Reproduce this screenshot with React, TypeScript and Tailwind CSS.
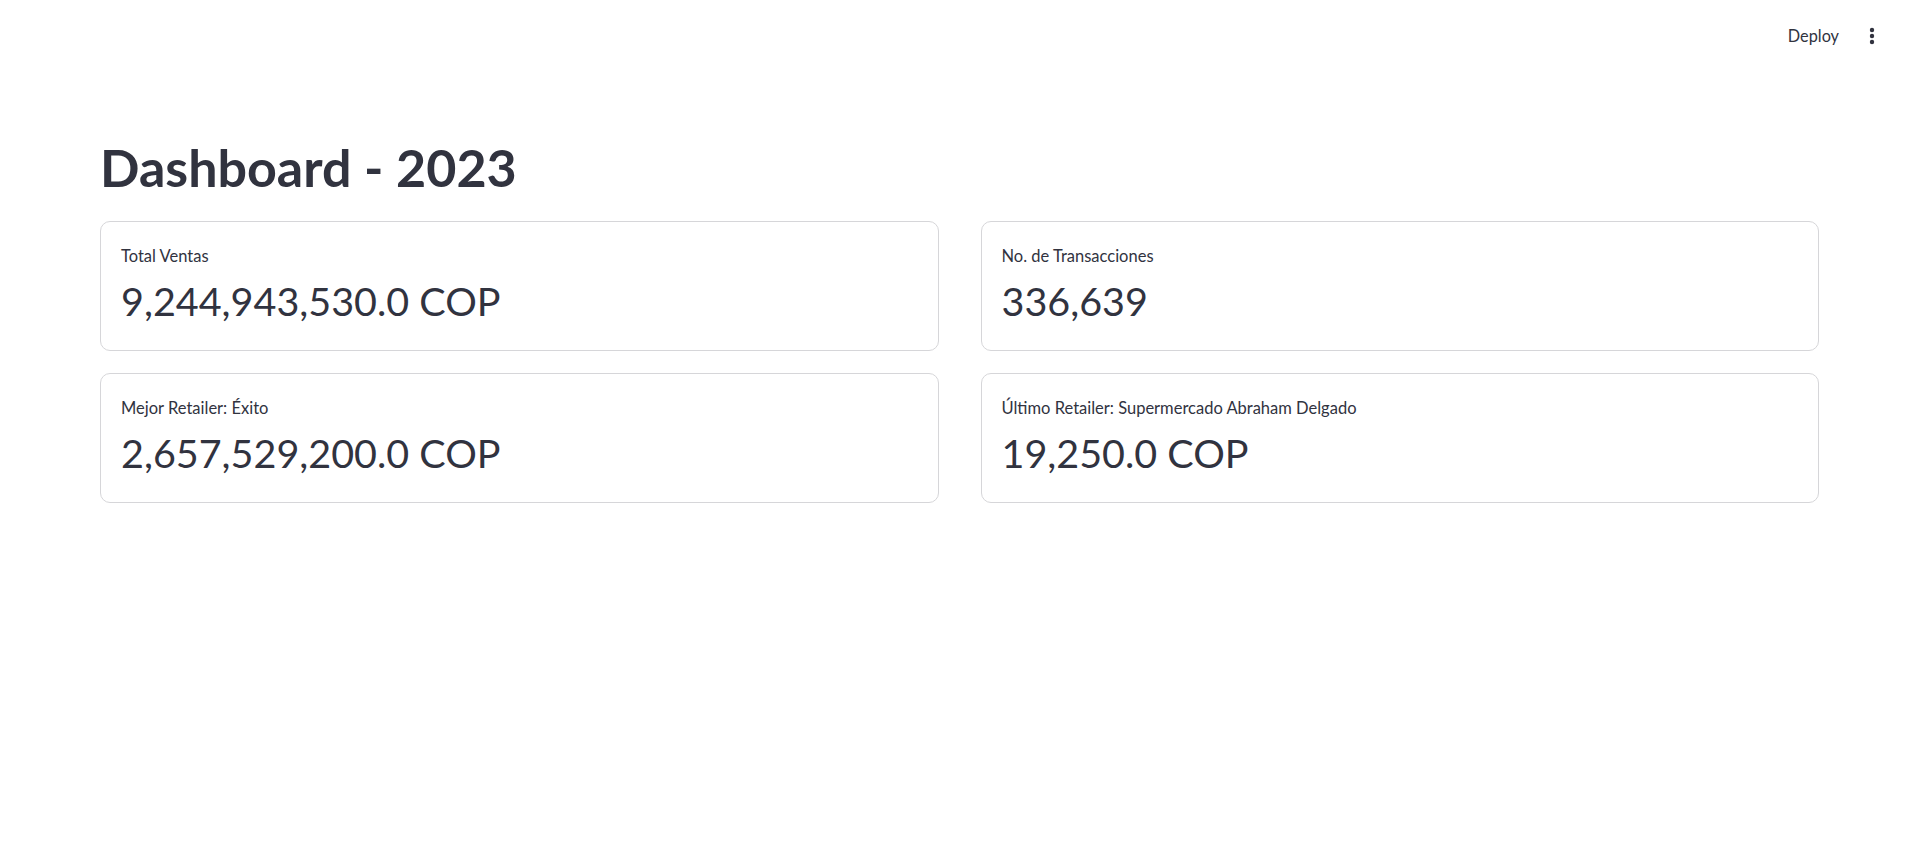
const font = { fontFamily: '"Lato", "Noto Sans", sans-serif' }

type Metric = {
	label: string,
	value: string
}

const METRICS: Metric[] = [
	{ label: 'Total Ventas', value: '9,244,943,530.0 COP' },
	{ label: 'No. de Transacciones', value: '336,639' },
	{ label: 'Mejor Retailer: Éxito', value: '2,657,529,200.0 COP' },
	{ label: 'Último Retailer: Supermercado Abraham Delgado', value: '19,250.0 COP' }
]

const MetricCard = ({ metric }: { metric: Metric }) => (
	<div className="h-[130px] rounded-[10px] border border-[#d6d6d9] px-[20px] pt-[22px]">
		<div className="text-[16.5px] leading-[24px] text-[#31333f]">{metric.label}</div>
		<div className="mt-[7px] text-[39.5px] leading-[52px] text-[#31333f]">{metric.value}</div>
	</div>
)

export default function App() {
	return (
		<div className="min-h-[849px] w-full bg-white text-[#31333f]" style={font}>
			<header className="flex h-[72px] items-center justify-end gap-[30px] pr-[44px]">
				<button className="text-[16.3px] text-[#31333f]">Deploy</button>
				<svg width="6" height="18" viewBox="0 0 6 18" className="text-[#31333f]">
					<circle cx="3" cy="3" r="2.2" fill="currentColor" />
					<circle cx="3" cy="9" r="2.2" fill="currentColor" />
					<circle cx="3" cy="15" r="2.2" fill="currentColor" />
				</svg>
			</header>
			<main className="px-[100px] pt-[66px]">
				<h1 className="text-[52px] font-bold leading-[58px] text-[#31333f]">Dashboard - 2023</h1>
				<div className="mt-[25px] grid grid-cols-2 gap-x-[42px] gap-y-[22px]">
					{METRICS.map(metric => (
						<MetricCard key={metric.label} metric={metric} />
					))}
				</div>
			</main>
		</div>
	)
}
